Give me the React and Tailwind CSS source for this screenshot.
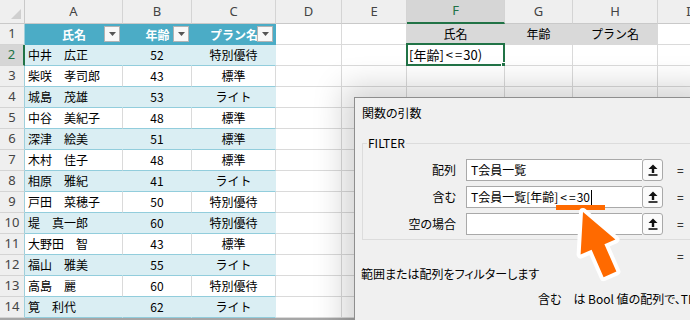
import clsx from 'clsx'

const COLS = [
  { id: 'A', w: 'w-[98px]' },
  { id: 'B', w: 'w-[69px]' },
  { id: 'C', w: 'w-[84px]' },
  { id: 'D', w: 'w-[66px]' },
  { id: 'E', w: 'w-[65px]' },
  { id: 'F', w: 'w-[98px]' },
  { id: 'G', w: 'w-[68px]' },
  { id: 'H', w: 'w-[85px]' },
  { id: 'I', w: 'w-[62px]' },
]

const MEMBERS = [
  ['中井　広正', 52, '特別優待'],
  ['柴咲　孝司郎', 43, '標準'],
  ['城島　茂雄', 53, 'ライト'],
  ['中谷　美紀子', 48, '標準'],
  ['深津　絵美', 51, '標準'],
  ['木村　佳子', 48, '標準'],
  ['相原　雅紀', 41, 'ライト'],
  ['戸田　菜穂子', 50, '特別優待'],
  ['堤　真一郎', 60, '特別優待'],
  ['大野田　智', 43, '標準'],
  ['福山　雅美', 55, 'ライト'],
  ['高島　麗', 60, '特別優待'],
  ['筧　利代', 62, 'ライト'],
]

const HEAD = { A: '氏名', B: '年齢', C: 'プラン名' }
const OUT_HEAD = { F: '氏名', G: '年齢', H: 'プラン名' }

// Meiryo draws "<=" quite wide, so space it a little
const Le = () => (
  <>
    <span className="pl-[2px] pr-[2px]">&lt;</span>
    <span className="pr-[1px]">=</span>
  </>
)

function FilterBtn() {
  return (
    <span className="absolute right-[3px] top-[2px] w-[16px] h-[16px] bg-[#f8f8f8] border border-[#b3b3b3] flex items-center justify-center">
      <svg width="7" height="4" viewBox="0 0 7 4">
        <polygon points="0,0 7,0 3.5,4" fill="#555" />
      </svg>
    </span>
  )
}

function UpBtn() {
  return (
    <div className="w-[21px] h-[22px] shrink-0 rounded-[3px] border border-[#a9a9a9] bg-[#fbfbfb] flex items-center justify-center">
      <svg width="10" height="12" viewBox="0 0 10 12">
        <polygon points="5,0.5 9.5,5 6.2,5 6.2,9 3.8,9 3.8,5 0.5,5" fill="#111" />
        <rect x="0.5" y="10.2" width="9" height="1.6" fill="#111" />
      </svg>
    </div>
  )
}

function Cell({ row, col }) {
  const inTable = ['A', 'B', 'C'].includes(col.id)
  const banded = row % 2 === 0

  if (row === 1) {
    if (inTable) {
      return (
        <div className={clsx(col.w, 'shrink-0 relative flex items-center justify-center bg-[#4bacc6] text-white font-bold')}>
          {HEAD[col.id]}
          <FilterBtn />
        </div>
      )
    }
    const out = OUT_HEAD[col.id]
    return (
      <div
        className={clsx(
          col.w,
          'shrink-0 flex items-center justify-center border-r border-b',
          out ? 'bg-[#d9d9d9] border-[#d9d9d9]' : 'bg-white border-[#dadada]'
        )}
      >
        {out}
      </div>
    )
  }

  if (inTable) {
    const m = MEMBERS[row - 2]
    const txt = col.id === 'A' ? m[0] : col.id === 'B' ? m[1] : m[2]
    return (
      <div
        className={clsx(
          col.w,
          'shrink-0 flex items-center border-b border-b-[#92cddc] border-r',
          banded ? 'bg-[#daeef3] border-r-[#daeef3]' : 'bg-white border-r-[#dadada]',
          col.id === 'A' ? 'pl-[3px]' : 'justify-center'
        )}
      >
        {txt}
      </div>
    )
  }

  return (
    <div className={clsx(col.w, 'shrink-0 relative flex items-center border-r border-b border-[#dadada] bg-white')}>
      {row === 2 && col.id === 'F' && (
        <>
          <span className="pl-[2px] whitespace-nowrap text-[13px]">
            [年齢]<Le />30)
          </span>
          <span className="absolute -left-[1px] -top-[2px] -right-[1px] -bottom-[1px] border-2 border-[#217346]" />
          <span className="absolute -right-[3px] -bottom-[3px] w-[6px] h-[6px] bg-[#217346] border border-white" />
        </>
      )}
    </div>
  )
}

function ArgRow({ label, children, caret }) {
  return (
    <div className="flex items-center h-[22px]">
      <div className="w-[93px] text-right">{label}</div>
      <div className="ml-[10px] flex w-[197px] h-[22px]">
        <div className="flex-1 flex items-center bg-white border border-r-0 border-[#a9a9a9] pl-[4px] whitespace-nowrap">
          {children}
          {caret && <span className="inline-block w-[1px] h-[15px] bg-black ml-[1px]" />}
        </div>
        <UpBtn />
      </div>
      <div className="ml-[14px]">=</div>
    </div>
  )
}

export default function App() {
  const rows = Array.from({ length: 14 }, (_, i) => i + 1)

  return (
    <div className="relative w-[690px] h-[320px] overflow-hidden bg-white text-[12px] text-black font-['Noto_Sans_CJK_JP',sans-serif]">
      {/* column letters */}
      <div className="flex h-[24px] font-['Noto_Sans',sans-serif] text-[13px] text-[#444]">
        <div className="w-[25px] shrink-0 flex items-end justify-end pr-[3px] pb-[4px] bg-[#efefef] border-r border-b border-[#c9c9c9]">
          <svg width="10" height="10" viewBox="0 0 10 10">
            <polygon points="10,0 10,10 0,10" fill="#cfcfcf" />
          </svg>
        </div>
        {COLS.map((c) => (
          <div
            key={c.id}
            className={clsx(
              c.w,
              'shrink-0 flex items-center justify-center border-r border-r-[#d4d4d4]',
              c.id === 'F'
                ? 'bg-[#d6d6d6] text-[#217346] border-b-2 border-b-[#217346]'
                : 'bg-[#efefef] border-b border-b-[#c9c9c9]'
            )}
          >
            {c.id}
          </div>
        ))}
      </div>

      {rows.map((r) => (
        <div key={r} className="flex h-[21px]">
          <div
            className={clsx(
              'w-[25px] shrink-0 flex items-center justify-center border-b border-b-[#d4d4d4] font-["Noto_Sans",sans-serif] text-[13px]',
              r === 2
                ? 'bg-[#d6d6d6] text-[#217346] border-r-2 border-r-[#217346]'
                : 'bg-[#efefef] text-[#444] border-r border-r-[#9fcfdb]'
            )}
          >
            {r}
          </div>
          {COLS.map((c) => (
            <Cell key={c.id} row={r} col={c} />
          ))}
        </div>
      ))}
      <div className="h-[2px] bg-[#a6a6a6]" />

      {/* 関数の引数 dialog */}
      <div className="absolute left-[354px] top-[97px] w-[350px] h-[240px] bg-[#f0f0f0] border border-[#8e8e8e] shadow-[0_0_30px_10px_rgba(0,0,0,0.18)] [font-feature-settings:'palt']">
        <div className="pl-[7px] pt-[7px] leading-[16px]">関数の引数</div>
        <fieldset className="ml-[7px] mt-[15px] w-[340px] border border-[#dcdcdc] pt-[9px] pb-[4px]">
          <legend className="ml-[4px] px-[1px] leading-[14px]">FILTER</legend>
          <div className="flex flex-col gap-[5px]">
            <ArgRow label="配列">T会員一覧</ArgRow>
            <ArgRow label="含む" caret>
              T会員一覧[年齢]<Le />30
            </ArgRow>
            <ArgRow label="空の場合" />
          </div>
        </fieldset>
        <div className="pl-[322px] mt-[8px] leading-[16px]">=</div>
        <div className="pl-[6px] mt-[2px] leading-[16px]">範囲または配列をフィルターします</div>
        <div className="pl-[183px] mt-[9px] leading-[16px] whitespace-nowrap">
          含む　は Bool 値の配列で、TRUE の値は保持する行または列を表します。
        </div>
      </div>

      {/* orange callout */}
      <div className="absolute left-[556px] top-[205px] w-[49px] h-[5px] bg-[#ff6a00]" />
      <svg className="absolute left-0 top-0 pointer-events-none" width="690" height="320" viewBox="0 0 690 320">
        <polygon
          points="583,212 615.4,239.5 604.4,244.2 616.4,271.6 603.6,277.2 591.6,249.8 580.6,254.5"
          fill="#ff6a00"
          stroke="#fff"
          strokeWidth="8"
          strokeLinejoin="round"
          paintOrder="stroke"
        />
      </svg>
    </div>
  )
}
